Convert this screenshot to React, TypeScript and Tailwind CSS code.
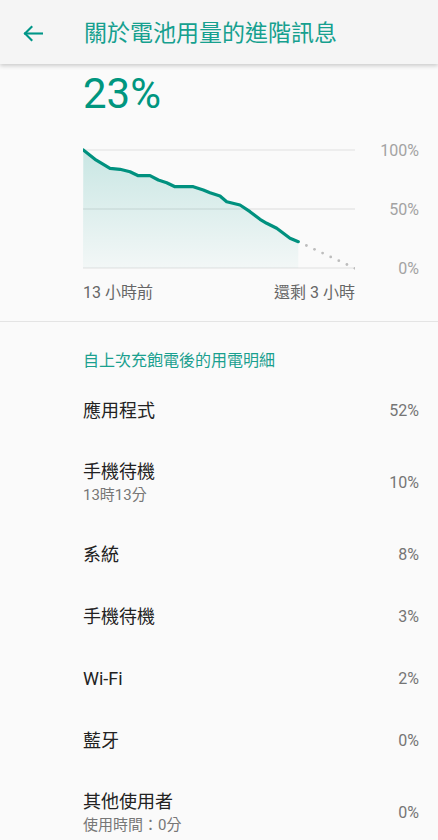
import React from 'react';

const font = { fontFamily: 'Roboto, "Noto Sans CJK TC", sans-serif' };

const linePoints: [number, number][] = [
  [0.3, 5], [12, 14.3], [18.7, 18.3], [27, 23.3], [37, 24.3], [47, 26.7], [55.3, 30.7],
  [67, 30.7], [75.3, 35], [83.7, 37.7], [92, 41.7], [110.3, 41.7], [120.3, 45], [127, 47.7],
  [137, 51], [143.7, 56.7], [157, 60], [167, 66.7], [177, 74.3], [183.7, 78.3], [193.7, 83.3],
  [207, 93.3], [215.3, 96.7],
];

const rows = [
  { name: '應用程式', pct: '52%' },
  { name: '手機待機', sub: '13時13分', pct: '10%' },
  { name: '系統', pct: '8%' },
  { name: '手機待機', pct: '3%' },
  { name: 'Wi-Fi', pct: '2%' },
  { name: '藍牙', pct: '0%' },
  { name: '其他使用者', sub: '使用時間：0分', pct: '0%' },
];

const BatteryChart: React.FC = () => {
  const line = linePoints.map(([x, y], i) => `${i === 0 ? 'M' : 'L'}${x} ${y}`).join(' ');
  const last = linePoints[linePoints.length - 1];
  const area = `${line} L${last[0]} 123 L0 123 Z`;
  const dots: [number, number][] = [];
  for (let i = 1; i <= 7; i++) {
    const t = i / 7;
    dots.push([last[0] + (272 - last[0]) * t, last[1] + (123.3 - last[1]) * t]);
  }

  return (
    <div className="flex">
      <svg width="272" height="128" viewBox="0 0 272 128" className="shrink-0">
        <defs>
          <linearGradient id="fill" x1="0" y1="0" x2="0" y2="1">
            <stop offset="0%" stopColor="#009688" stopOpacity="0.2" />
            <stop offset="100%" stopColor="#009688" stopOpacity="0.03" />
          </linearGradient>
        </defs>
        <line x1="0" y1="5" x2="272" y2="5" stroke="#e0e0e0" strokeWidth="1" />
        <line x1="0" y1="64" x2="272" y2="64" stroke="#dcdcdc" strokeWidth="1" />
        <line x1="0" y1="123" x2="272" y2="123" stroke="#e0e0e0" strokeWidth="1" />
        <path d={area} fill="url(#fill)" />
        <path d={line} fill="none" stroke="#00917f" strokeWidth="3.2" strokeLinejoin="round" strokeLinecap="round" />
        {dots.map(([x, y], i) => (
          <circle key={i} cx={x} cy={y} r="1.4" fill="#bdbdbd" />
        ))}
      </svg>
      <div className="flex-1 flex flex-col items-end text-[16px] leading-[20px] text-[#a3a3a3]">
        <span className="mt-[-4px]">100%</span>
        <span className="mt-[39px]">50%</span>
        <span className="mt-[39px]">0%</span>
      </div>
    </div>
  );
};

export default function App() {
  return (
    <div className="w-[438px] h-[840px] overflow-hidden bg-[#fafafa]" style={font}>
      <header className="h-[64px] bg-[#f5f5f5] flex items-center shadow-[0_2px_4px_rgba(0,0,0,0.18)] relative z-10 pt-[3px]">
        <div className="w-[84px] flex pl-[22px]">
          <svg width="21" height="17" viewBox="0 0 21 17" fill="none" stroke="#009688" strokeWidth="2.1" strokeLinecap="square">
            <path d="M20 8.5H3" />
            <path d="M9.5 2L3 8.5L9.5 15" strokeLinejoin="miter" />
          </svg>
        </div>
        <h1 className="text-[23px] leading-[30px] text-[#16a08f]">關於電池用量的進階訊息</h1>
      </header>

      <section className="pl-[83px] pr-[19px] pt-[9px] pb-[18px] border-b border-[#e4e4e4]">
        <div className="text-[42px] leading-[42px] text-[#00967f]">23%</div>
        <div className="mt-[30px]">
          <BatteryChart />
        </div>
        <div className="w-[272px] flex justify-between text-[16px] leading-[20px] text-[#666666] mt-[4px]">
          <span>13 小時前</span>
          <span>還剩 3 小時</span>
        </div>
      </section>

      <section className="pl-[83px] pr-[19px] pt-[29px]">
        <h2 className="text-[16px] leading-[20px] text-[#1aa08f] mb-[9px]">自上次充飽電後的用電明細</h2>
        {rows.map((r, i) => (
          <div key={i} className={`flex items-center justify-between ${r.sub ? 'h-[82px]' : 'h-[62px]'}`}>
            <div className="flex flex-col">
              <span className="text-[18px] leading-[24px] text-[#222222]">{r.name}</span>
              {r.sub && <span className="text-[15px] leading-[22px] text-[#777777]">{r.sub}</span>}
            </div>
            <span className="text-[16px] leading-[20px] text-[#757575]">{r.pct}</span>
          </div>
        ))}
      </section>
    </div>
  );
}
